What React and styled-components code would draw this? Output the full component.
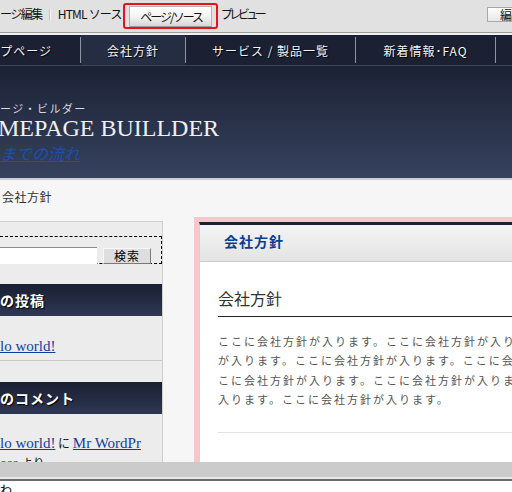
import React from "react";
import styled, { createGlobalStyle } from "styled-components";

const GlobalStyle = createGlobalStyle`
  html, body {
    margin: 0;
    padding: 0;
    background: #ffffff;
    overflow: hidden;
  }
  body {
    font-family: "Noto Sans CJK JP", "Noto Sans", sans-serif;
  }
`;

const Screen = styled.div`
  width: 512px;
  height: 492px;
  overflow: hidden;
  display: flex;
  flex-direction: column;
`;

const Toolbar = styled.div`
  height: 30px;
  padding-top: 2px;
  display: flex;
  align-items: flex-start;
  background: #e1e1e1;
  border-bottom: 1px solid #9c9c9c;
  font-size: 12px;
  color: #111;
  overflow: hidden;
  flex-shrink: 0;
`;

const PlainTab = styled.div`
  padding-top: 5px;
  line-height: 14px;
  letter-spacing: ${(p) => p.$ls}px;
  white-space: nowrap;
`;

const TabDivider = styled.div`
  width: 1px;
  height: 11px;
  margin: 7px 7px 0 7px;
  background: #c4c4c4;
  border-right: 1px solid #f4f4f4;
`;

const ActiveFrame = styled.div`
  box-sizing: border-box;
  width: 95px;
  height: 26px;
  margin: 1px 3px 0 1px;
  border: 2px solid #e5141c;
  border-radius: 3px;
  padding: 1px 4px 0 4px;
`;

const ActiveTab = styled.div`
  box-sizing: border-box;
  height: 21px;
  border: 1px solid #b4b4b4;
  border-bottom-color: #9a9a9a;
  background: linear-gradient(#ffffff, #f2f2f2 55%, #d6d6d6);
  text-align: center;
  line-height: 20px;
  letter-spacing: -2px;
  padding-left: 2px;
`;

const EditButton = styled.div`
  margin-left: auto;
  margin-top: 5px;
  width: 25px;
  height: 15px;
  box-sizing: border-box;
  border: 1px solid #a8a8a8;
  border-right: none;
  background: linear-gradient(#ffffff, #e6e6e6);
  padding-left: 12px;
  font-size: 12px;
  line-height: 13px;
  white-space: nowrap;
  overflow: hidden;
`;

const Viewport = styled.div`
  height: 427px;
  overflow: hidden;
  border-top: 2px solid #f0f0f0;
  flex-shrink: 0;
  background: #f6f6f6;
`;

const Nav = styled.div`
  height: 30px;
  display: flex;
  background: #1b2133;
  border-bottom: 1px solid #3a4358;
`;

const NavItem = styled.div`
  width: ${(p) => p.$w}px;
  flex-shrink: 0;
  box-sizing: border-box;
  display: flex;
  align-items: center;
  justify-content: ${(p) => (p.$end ? "flex-end" : "center")};
  padding-right: ${(p) => (p.$end ? 28 : 0)}px;
  background: ${(p) => (p.$active ? "#252d43" : "transparent")};
  color: #f4f4f4;
  font-size: 12px;
  letter-spacing: 1px;
  text-shadow: 1px 1px 1px #000;
  white-space: nowrap;
`;

const NavSep = styled.div`
  width: 1px;
  flex-shrink: 0;
  margin: 2px 0;
  background: #8d94a4;
`;

const Header = styled.div`
  height: 114px;
  box-sizing: border-box;
  padding-top: 35px;
  background: linear-gradient(#1c2235, #36425f);
  border-bottom: 2px solid #cfcfcf;
`;

const SiteSub = styled.div`
  font-size: 11px;
  line-height: 14px;
  letter-spacing: 1.4px;
  color: #d8dbe2;
  white-space: nowrap;
`;

const SiteTitle = styled.div`
  font-family: "Liberation Serif", "Times New Roman", serif;
  font-size: 24px;
  line-height: 26px;
  color: #f0f0f0;
  white-space: nowrap;
  margin-left: -2px;
`;

const SiteLink = styled.a`
  display: inline-block;
  margin-top: 2px;
  font-size: 16px;
  line-height: 20px;
  font-style: italic;
  color: #1d4fae;
  text-decoration: underline;
  white-space: nowrap;
`;

const Breadcrumb = styled.div`
  padding: 10px 0 0 2px;
  margin-bottom: 13px;
  font-size: 12px;
  line-height: 14px;
  letter-spacing: 0.5px;
  color: #333;
`;

const Columns = styled.div`
  display: flex;
  align-items: flex-start;
`;

const Sidebar = styled.div`
  width: 163px;
  flex-shrink: 0;
  box-sizing: border-box;
  margin-top: 4px;
  padding-top: 14px;
  background: #ececec;
  border-top: 1px solid #cfcfcf;
  border-right: 1px solid #cfcfcf;
  height: 300px;
`;

const SearchBox = styled.div`
  width: 162px;
  box-sizing: border-box;
  border: 1px dashed #000;
  border-left: none;
  padding-top: 9px;
  display: flex;
  align-items: flex-end;
  height: 28px;
`;

const SearchInput = styled.div`
  width: 97px;
  height: 17px;
  box-sizing: border-box;
  background: #fff;
  border-top: 1px solid #8a8a8a;
  margin-bottom: -1px;
`;

const SearchButton = styled.div`
  width: 48px;
  height: 16px;
  box-sizing: border-box;
  margin-left: 6px;
  margin-bottom: -1px;
  background: #dedede;
  border: 1px solid;
  border-color: #f8f8f8 #7a7a7a #7a7a7a #f8f8f8;
  font-size: 12px;
  line-height: 13px;
  text-align: center;
  letter-spacing: 1px;
  color: #000;
`;

const WidgetTitle = styled.div`
  margin-top: ${(p) => p.$top}px;
  width: 162px;
  height: 32px;
  box-sizing: border-box;
  background: linear-gradient(#1a1f31, #2d3855);
  color: #fff;
  font-size: 14px;
  font-weight: bold;
  letter-spacing: 1px;
  line-height: 32px;
  text-shadow: 1px 1px 1px #000;
  white-space: nowrap;
`;

const WidgetBody = styled.div`
  width: 147px;
  padding: ${(p) => p.$top}px 15px 4px 0;
  line-height: 20px;
  font-size: 12px;
  color: #111;
  word-break: break-all;
  border-bottom: ${(p) => (p.$line ? "1px solid #c9c9c9" : "none")};
`;

const PostLink = styled.a`
  font-family: "Liberation Serif", "Times New Roman", serif;
  font-size: 15px;
  color: #0c3fa0;
  text-decoration: underline;
`;

const Main = styled.div`
  margin-left: 31px;
  flex-shrink: 0;
  width: 480px;
  border: 5px solid #f6c7cc;
  border-right: none;
  border-bottom: none;
  background: #fff;
`;

const Panel = styled.div`
  border-left: 1px solid #d2d2d2;
  border-top: 3px solid #1c2234;
`;

const PanelHead = styled.div`
  height: 37px;
  box-sizing: border-box;
  padding: 6px 0 0 24px;
  line-height: 20px;
  background: linear-gradient(#f4f4f4, #e4e4e4);
  border-bottom: 1px solid #cacaca;
  color: #0b3c92;
  font-size: 14px;
  font-weight: bold;
  letter-spacing: 1px;
`;

const PanelBody = styled.div`
  padding: 24px 0 0 18px;
`;

const EntryTitle = styled.h2`
  margin: 0;
  font-size: 16px;
  font-weight: normal;
  line-height: 24px;
  color: #333;
  padding-bottom: 6px;
  border-bottom: 1px solid #222;
`;

const EntryText = styled.p`
  margin: 15px 0 23px 0;
  width: 435px;
  font-size: 11px;
  line-height: 19.3px;
  letter-spacing: 2px;
  color: #555;
`;

const EntryRule = styled.div`
  height: 40px;
  border-top: 1px solid #e3e3e3;
  background: #fff;
`;

const ScrollBar = styled.div`
  height: 15px;
  background: #cbcbcb;
  border-bottom: 2px solid #e9e9e9;
  flex-shrink: 0;
`;

const StatusLine = styled.div`
  border-top: 2px solid #6b6b6b;
  padding-top: 2px;
  font-size: 12px;
  line-height: 14px;
  color: #000;
  background: #fff;
`;

const navItems = [
  { label: "プページ", w: 80, end: true },
  { label: "会社方針", w: 104, active: true },
  { label: "サービス / 製品一覧", w: 169 },
  { label: "新着情報･FAQ", w: 139 },
  { label: "", w: 40 },
];

const bodyText = "ここに会社方針が入ります。".repeat(9);

export default function App() {
  return (
    <Screen>
      <GlobalStyle />
      <Toolbar>
        <PlainTab $ls={-1.5}>ージ編集</PlainTab>
        <TabDivider />
        <PlainTab $ls={-0.8}>HTML ソース</PlainTab>
        <ActiveFrame>
          <ActiveTab>ページ/ソース</ActiveTab>
        </ActiveFrame>
        <PlainTab $ls={-3.5}>プレビュー</PlainTab>
        <EditButton>編集</EditButton>
      </Toolbar>

      <Viewport>
        <Nav>
          {navItems.map((item, i) => (
            <React.Fragment key={i}>
              {i > 0 && <NavSep />}
              <NavItem $w={item.w} $active={item.active} $end={item.end}>
                {item.label}
              </NavItem>
            </React.Fragment>
          ))}
        </Nav>

        <Header>
          <SiteSub>ージ・ビルダー</SiteSub>
          <SiteTitle>MEPAGE BUILLDER</SiteTitle>
          <SiteLink href="#">までの流れ</SiteLink>
        </Header>

        <Breadcrumb>会社方針</Breadcrumb>

        <Columns>
          <Sidebar>
            <SearchBox>
              <SearchInput />
              <SearchButton>検索</SearchButton>
            </SearchBox>

            <WidgetTitle $top={20}>の投稿</WidgetTitle>
            <WidgetBody $top={20} $line>
              <PostLink href="#">lo world!</PostLink>
            </WidgetBody>

            <WidgetTitle $top={21}>のコメント</WidgetTitle>
            <WidgetBody $top={19}>
              <PostLink href="#">lo world!</PostLink> に{" "}
              <PostLink href="#">Mr WordPress</PostLink> より
            </WidgetBody>
          </Sidebar>

          <Main>
            <Panel>
              <PanelHead>会社方針</PanelHead>
              <PanelBody>
                <EntryTitle>会社方針</EntryTitle>
                <EntryText>{bodyText}</EntryText>
                <EntryRule />
              </PanelBody>
            </Panel>
          </Main>
        </Columns>
      </Viewport>

      <ScrollBar />
      <StatusLine>わ</StatusLine>
    </Screen>
  );
}
